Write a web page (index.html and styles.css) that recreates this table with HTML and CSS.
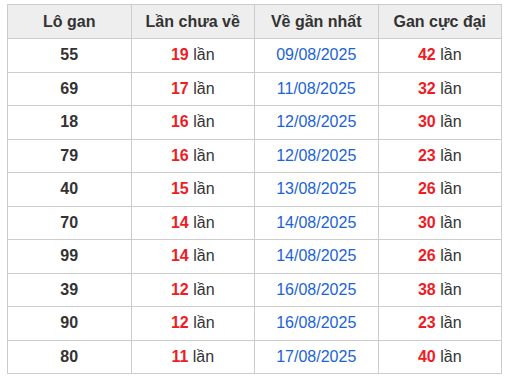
FILE: index.html
```html
<!DOCTYPE html>
<html lang="vi">
<head>
    <meta charset="UTF-8">
    <title>Lô gan</title>
    <link rel="stylesheet" href="styles.css">
</head>
<body>
<table class="gan">
    <thead>
        <tr>
            <th>Lô gan</th>
            <th>Lần chưa về</th>
            <th>Về gần nhất</th>
            <th>Gan cực đại</th>
        </tr>
    </thead>
    <tbody>
        <tr><td class="num">55</td><td><b>19</b> lần</td><td class="date">09/08/2025</td><td><b>42</b> lần</td></tr>
        <tr><td class="num">69</td><td><b>17</b> lần</td><td class="date">11/08/2025</td><td><b>32</b> lần</td></tr>
        <tr><td class="num">18</td><td><b>16</b> lần</td><td class="date">12/08/2025</td><td><b>30</b> lần</td></tr>
        <tr><td class="num">79</td><td><b>16</b> lần</td><td class="date">12/08/2025</td><td><b>23</b> lần</td></tr>
        <tr><td class="num">40</td><td><b>15</b> lần</td><td class="date">13/08/2025</td><td><b>26</b> lần</td></tr>
        <tr><td class="num">70</td><td><b>14</b> lần</td><td class="date">14/08/2025</td><td><b>30</b> lần</td></tr>
        <tr><td class="num">99</td><td><b>14</b> lần</td><td class="date">14/08/2025</td><td><b>26</b> lần</td></tr>
        <tr><td class="num">39</td><td><b>12</b> lần</td><td class="date">16/08/2025</td><td><b>38</b> lần</td></tr>
        <tr><td class="num">90</td><td><b>12</b> lần</td><td class="date">16/08/2025</td><td><b>23</b> lần</td></tr>
        <tr><td class="num">80</td><td><b>11</b> lần</td><td class="date">17/08/2025</td><td><b>40</b> lần</td></tr>
    </tbody>
</table>
</body>
</html>
```

FILE: styles.css
```css
* {
    padding: 0;
    margin: 0;
}
html, body {
    background-color: #fff;
}
body {
    padding: 4px 6px 0 7px;
    font-family: "Liberation Sans", Arial, sans-serif;
    font-size: 16px;
    color: #333;
}

.gan {
    width: 495px;
    border-collapse: collapse;
    table-layout: fixed;
}

.gan th,
.gan td {
    border: 1px solid #cccccc;
    text-align: center;
}

.gan th {
    height: 33px;
    background-color: #eeeeee;
    font-weight: bold;
}

.gan td {
    height: 32.5px;
}

.gan td b {
    color: #ee1c25;
}

.gan td.num {
    font-weight: bold;
}

.gan td.date {
    color: #1b64d6;
}
```
